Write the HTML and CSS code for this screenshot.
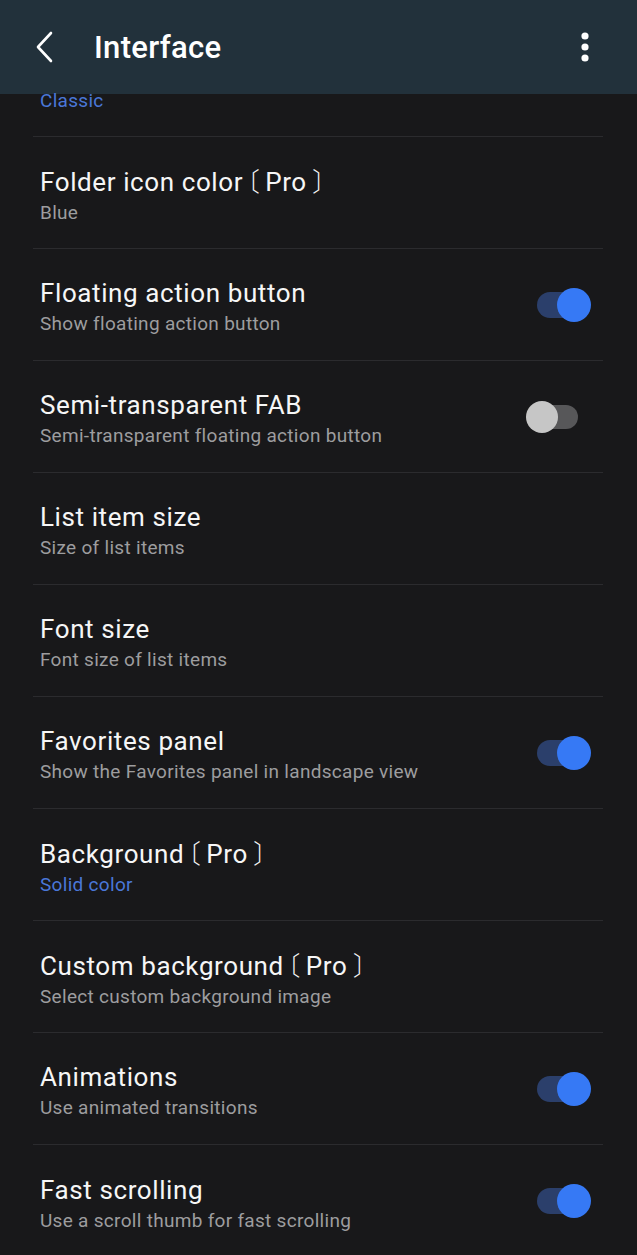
FILE: index.html
```html
<!DOCTYPE html>
<html>
<head>
<meta charset="utf-8">
<link rel="stylesheet" href="styles.css">
</head>
<body>
<header class="appbar">
  <svg class="back" width="20" height="32" viewBox="0 0 20 32"><path d="M16 2 L3 16 L16 30" fill="none" stroke="#fff" stroke-width="2.6" stroke-linecap="round" stroke-linejoin="round"/></svg>
  <h1 class="title">Interface</h1>
  <svg class="more" width="10" height="30" viewBox="0 0 10 30"><circle cx="5" cy="4" r="3.6" fill="#fff"/><circle cx="5" cy="15" r="3.6" fill="#fff"/><circle cx="5" cy="26" r="3.6" fill="#fff"/></svg>
</header>
<main class="list">
  <div class="item partial"><div class="sub accent">Classic</div></div>
  <div class="item"><div class="text"><div class="name">Folder icon color<span class="br open">〔</span>Pro<span class="br close">〕</span></div><div class="sub">Blue</div></div></div>
  <div class="item"><div class="text"><div class="name">Floating action button</div><div class="sub">Show floating action button</div></div><span class="toggle on"></span></div>
  <div class="item"><div class="text"><div class="name">Semi-transparent FAB</div><div class="sub">Semi-transparent floating action button</div></div><span class="toggle off"></span></div>
  <div class="item"><div class="text"><div class="name">List item size</div><div class="sub">Size of list items</div></div></div>
  <div class="item"><div class="text"><div class="name">Font size</div><div class="sub">Font size of list items</div></div></div>
  <div class="item"><div class="text"><div class="name">Favorites panel</div><div class="sub">Show the Favorites panel in landscape view</div></div><span class="toggle on"></span></div>
  <div class="item"><div class="text"><div class="name">Background<span class="br open">〔</span>Pro<span class="br close">〕</span></div><div class="sub accent">Solid color</div></div></div>
  <div class="item"><div class="text"><div class="name">Custom background<span class="br open">〔</span>Pro<span class="br close">〕</span></div><div class="sub">Select custom background image</div></div></div>
  <div class="item"><div class="text"><div class="name">Animations</div><div class="sub">Use animated transitions</div></div><span class="toggle on"></span></div>
  <div class="item last"><div class="text"><div class="name">Fast scrolling</div><div class="sub">Use a scroll thumb for fast scrolling</div></div><span class="toggle on"></span></div>
</main>
</body>
</html>
```
FILE: styles.css
```css
* { box-sizing: border-box; }
html, body { margin: 0; padding: 0; }
body {
  background: #18181a;
  font-family: Roboto, "Noto Sans", sans-serif;
  color: #f4f4f4;
  width: 637px;
  height: 1255px;
  overflow: hidden;
}
.appbar {
  height: 94px;
  background: #22313b;
  display: flex;
  align-items: center;
  padding: 0 47px 0 35px;
}
.title {
  margin: 0 0 0 39px;
  font-size: 31px;
  font-weight: 500;
  color: #fff;
  flex: 1;
  letter-spacing: 0.3px;
}
.more { display: block; }
.list { padding: 0 34px 0 33px; }
.item {
  height: 112px;
  border-bottom: 1px solid #2b2b2e;
  display: flex;
  align-items: center;
  padding: 0 12px 0 7px;
}
.item.partial {
  height: 43px;
  align-items: flex-start;
}
.item.last { border-bottom: none; }
.text { flex: 1; padding-top: 4px; }
.name {
  font-size: 26px;
  line-height: 32px;
  color: #f6f6f6;
  letter-spacing: 0.6px;
}
.br {
  font-family: "Noto Sans CJK JP", sans-serif;
  font-weight: 300;
  letter-spacing: 0;
  font-feature-settings: "palt" 1;
}
.br.open { margin-left: 3px; margin-right: 6px; }
.br.close { margin-left: 6px; }
.sub {
  font-size: 19px;
  line-height: 24px;
  color: #9d9d9f;
  margin-top: 3px;
  letter-spacing: 0.3px;
}
.sub.accent { color: #4a77d8; }
.partial .sub { margin-top: -5px; }
.toggle {
  position: relative;
  width: 54px;
  height: 34px;
  display: block;
}
.toggle::before {
  content: "";
  position: absolute;
  top: 4px;
  height: 26px;
  border-radius: 13px;
}
.toggle::after {
  content: "";
  position: absolute;
  border-radius: 50%;
}
.toggle.on::before { left: 0; width: 48px; background: #2b3f6b; }
.toggle.on::after { left: 20px; top: 0; width: 34px; height: 34px; background: #3679f5; }
.toggle.off { margin-right: 13px; }
.toggle.off::before { left: 14px; width: 40px; top: 5px; height: 24px; background: #575759; }
.toggle.off::after { left: 2px; top: 1px; width: 32px; height: 32px; background: #c6c6c6; }
```
